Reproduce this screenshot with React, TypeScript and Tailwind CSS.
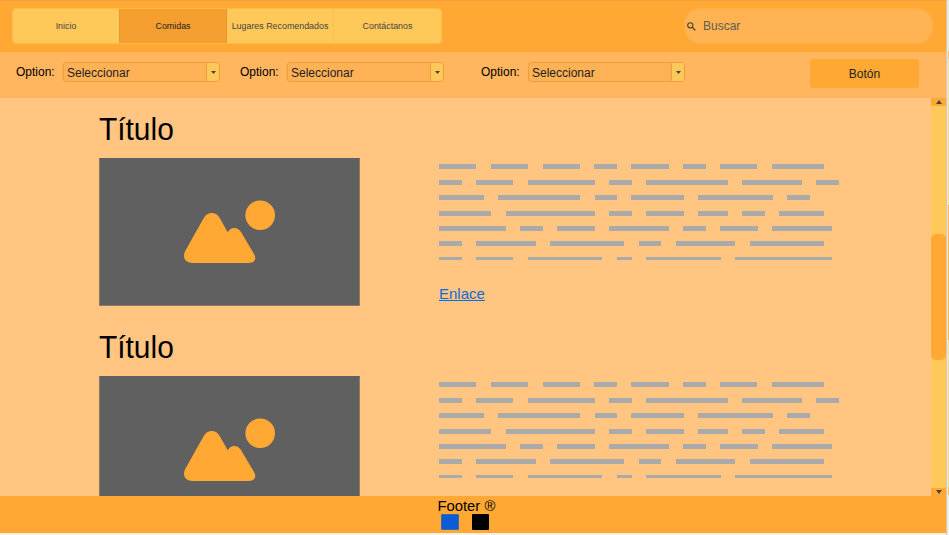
const FONT = "font-['Liberation_Sans',Arial,sans-serif]";

const UNIT = 7.42;
const LINES = [
  { gap: 'mt-0', h: 'h-[5px]', words: [5, 5, 5, 3, 5, 3, 5, 7] },
  { gap: 'mt-[11px]', h: 'h-[5px]', words: [3, 5, 9, 3, 11, 8, 3] },
  { gap: 'mt-[10px]', h: 'h-[5px]', words: [6, 11, 3, 7, 10, 3] },
  { gap: 'mt-[11px]', h: 'h-[5px]', words: [7, 12, 3, 5, 4, 3, 6] },
  { gap: 'mt-[10px]', h: 'h-[5px]', words: [9, 3, 5, 8, 3, 5, 8] },
  { gap: 'mt-[10px]', h: 'h-[5px]', words: [3, 8, 10, 3, 8, 10] },
  { gap: 'mt-[11px]', h: 'h-[2.5px]', words: [3, 5, 10, 2, 10, 13] },
];

function TextLines() {
  return (
    <div>
      {LINES.map((line, i) => (
        <div key={i} className={`flex gap-[14.4px] ${line.gap}`}>
          {line.words.map((w, j) => (
            <div key={j} className={`shrink-0 bg-[#aaaaaa] ${line.h}`} style={{ width: w * UNIT + 0.3 }} />
          ))}
        </div>
      ))}
    </div>
  );
}

function Card({ link }: { link?: string }) {
  return (
    <article className="h-[218px] shrink-0 pl-[99px]">
      <h2 className="h-[47px] text-[30.5px] leading-[36px] text-black">
        <span className="inline-block origin-left scale-x-[0.98]">Título</span>
      </h2>
      <div className="flex">
        <div className="h-[148px] w-[261px] shrink-0 border border-[#8c7a65] border-t-[#606060] bg-[#606060]">
          <svg width="259" height="146" viewBox="100 159 259 146" className="block" fill="#ffa834">
            <circle cx="260.2" cy="215.3" r="14.8" />
            <path d="M203.500 218.500C207.500 211.300 216 211.300 220 218.500L227.7 232.2C231 226.6 237.5 226.7 241 232L254 254C257 259 254.500 263 249 263H193C185.500 263 182 258 185.200 251Z" />
          </svg>
        </div>
        <div className="ml-[79px] pt-[6px]">
          <TextLines />
          {link && (
            <a className="mt-[24px] block text-[15px] leading-[20px] text-[#0b6be0] underline" href="#">{link}</a>
          )}
        </div>
      </div>
    </article>
  );
}

function Option({ className }: { className: string }) {
  return (
    <div className={`flex ${className}`}>
      <span className="mt-[2px] w-[47px] shrink-0 whitespace-nowrap text-[12px] leading-4 text-black">Option:</span>
      <div className="flex h-5 w-[157px] overflow-hidden rounded-[3px] border border-[#f09d3c] bg-[#ffb155]">
        <span className="flex-1 pl-[3px] pt-[2px] text-[12px] leading-4 text-[#222]">Seleccionar</span>
        <span className="flex w-[13px] items-center justify-center border-l border-[#f09d3c] bg-[#ffc959]">
          <svg width="5" height="3" viewBox="0 0 5 3"><path d="M0 0H5L2.5 3Z" fill="#444" /></svg>
        </span>
      </div>
    </div>
  );
}

export default function App() {
  return (
    <div className={`flex h-[535px] w-[949px] overflow-hidden bg-[#f6f1e9] ${FONT}`}>
      <div className="flex w-[946px] shrink-0 flex-col">
        <header className="flex h-[52px] shrink-0 border-t border-[#f0a03c] bg-[#ffa834] pl-3">
          <nav className="mt-[7px] flex h-9 w-[430px] overflow-hidden rounded-[4px] border border-[#fdbb48] bg-[#ffc959] text-[8.9px] leading-[34px] text-[#444]">
            <span className="w-[106px] text-center">Inicio</span>
            <span className="w-[108px] border-x border-[#ea972e] bg-[#f49f30] text-center text-[#222]">Comidas</span>
            <span className="w-[107px] whitespace-nowrap border-r border-[#fbc150] text-center">Lugares Recomendados</span>
            <span className="w-[107px] text-center">Contáctanos</span>
          </nav>
          <div className="ml-[242px] mt-[7px] flex h-9 w-[249px] items-center rounded-[16px] border border-[#ffaf46] bg-[#ffb352]">
            <svg className="ml-[2px] mt-px" width="9" height="9" viewBox="0 0 9 9" fill="none" stroke="#4d4030">
              <circle cx="3.3" cy="3.3" r="2.6" strokeWidth="1.1" />
              <path d="M5.200 5.200L8.400 8.400" strokeWidth="1.300" />
            </svg>
            <span className="ml-[7px] text-[12px] leading-4 text-[#625b52]">Buscar</span>
          </div>
        </header>
        <div className="flex h-[46px] shrink-0 bg-[#ffb65f]">
          <Option className="ml-4 mt-[10px]" />
          <Option className="ml-5 mt-[10px]" />
          <Option className="ml-[37px] mt-[10px]" />
          <button className="ml-[125px] mt-[7px] h-[29px] w-[109px] rounded-[3px] bg-[#ffa834] text-[12px] text-[#222]">Botón</button>
        </div>
        <main className="flex h-[398px] shrink-0 overflow-hidden bg-[#ffc581]">
          <div className="flex min-w-0 flex-1 flex-col overflow-hidden pt-[13px]">
            <Card link="Enlace" />
            <Card />
          </div>
          <div className="flex w-[15px] flex-col bg-[#ffc959]">
            <div className="flex h-2 items-center justify-center bg-[#ffa834]">
              <svg width="6" height="4" viewBox="0 0 6 4"><path d="M0 4H6L3 0Z" fill="#444" /></svg>
            </div>
            <div className="mt-[128px] h-[126px] rounded-[5px] bg-[#ffa834]" />
            <div className="mt-auto flex h-2 items-center justify-center bg-[#ffa834]">
              <svg width="6" height="4" viewBox="0 0 6 4"><path d="M0 0H6L3 4Z" fill="#444" /></svg>
            </div>
          </div>
        </main>
        <footer className="h-[37px] shrink-0 bg-[#ffa834] pl-[437.500px]">
          <div className="h-[18px] pt-[2px] text-[14.8px] leading-[17px] text-black">Footer ®</div>
          <div className="flex gap-[13px] pl-[3.500px]">
            <div className="h-4 w-[18px] rounded-[1px] border border-[#3c68a8] bg-[#0d5bd7]" />
            <div className="h-4 w-[17px] rounded-[1px] bg-black" />
          </div>
        </footer>
      </div>
      <div className="w-px bg-[#e6c7a0]" />
      <div className="w-px bg-[#e4e4ec]" />
      <div className="flex w-px flex-col">
        <div className="h-[51px] bg-[#f3e6d5]" />
        <div className="h-2 bg-[#fbbf70]" />
        <div className="h-[146px] bg-[#f8dc9c]" />
        <div className="h-[135px] bg-[#fbb458]" />
        <div className="h-[147px] bg-[#f8dc9c]" />
        <div className="h-2 bg-[#fbbf70]" />
      </div>
    </div>
  );
}
